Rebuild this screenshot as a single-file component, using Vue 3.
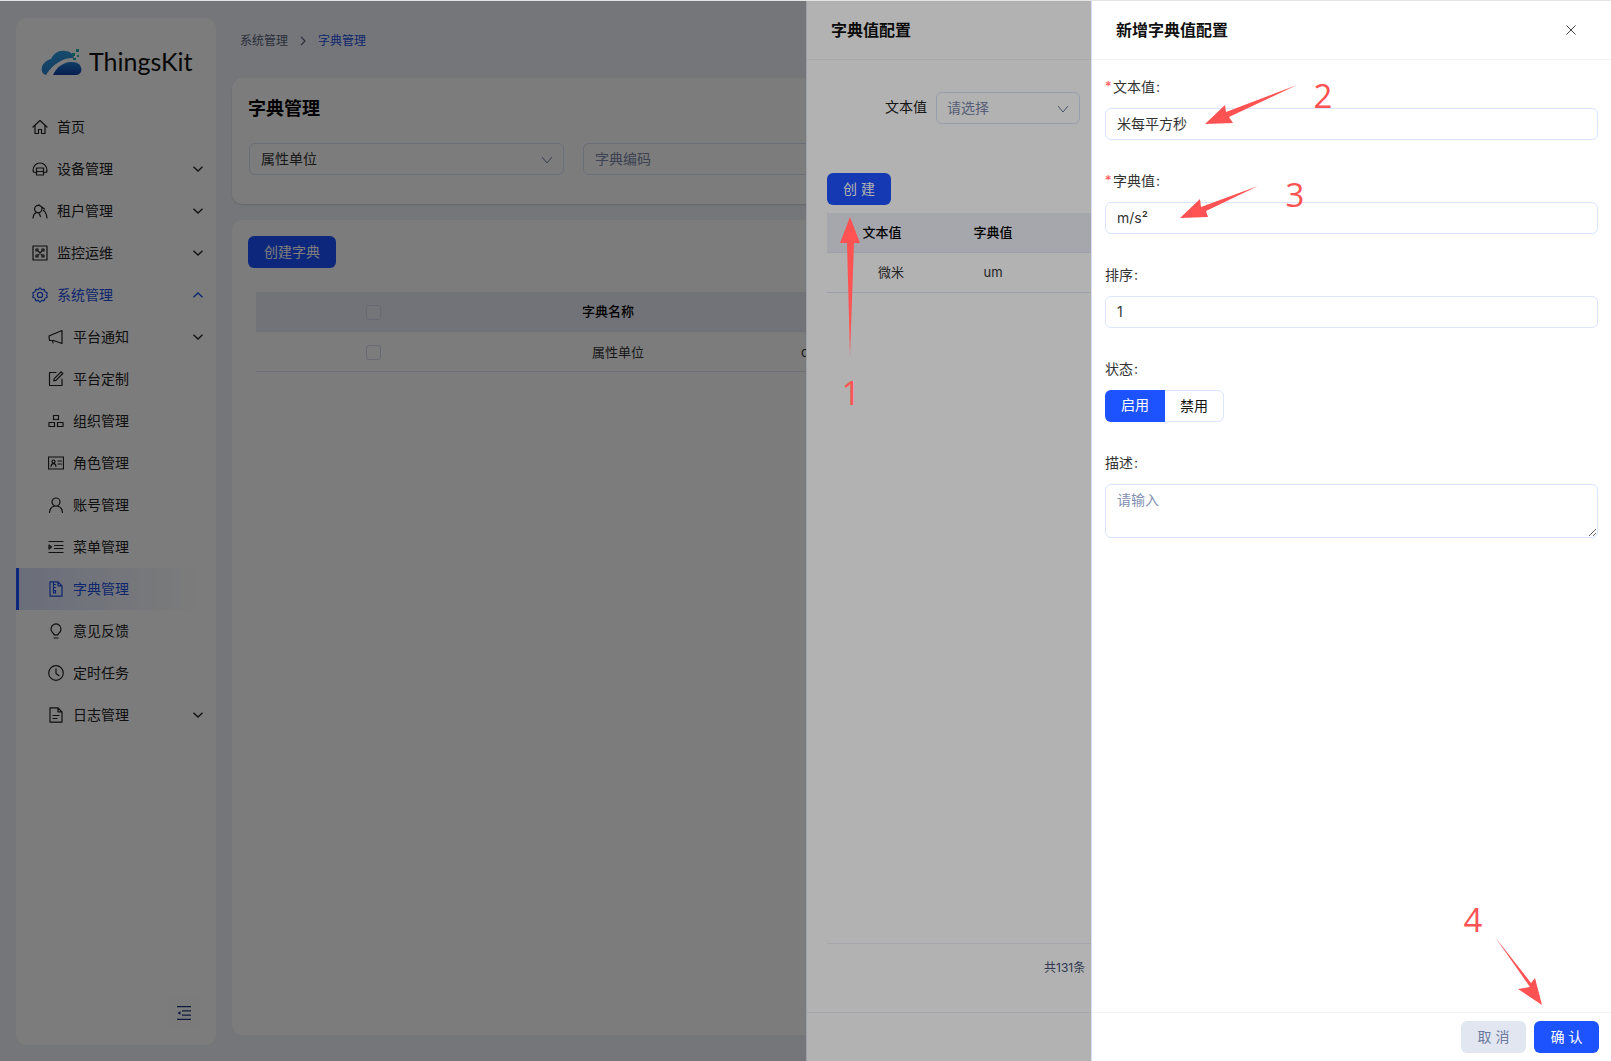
<script setup>
const icons = {
  home: 'M1 8 8 1.500 15 8M3 6.500V14.500h3.500v-4h3v4H13V6.500',
  device: 'M1 9.500C1 5 4 2 8 2s7 3 7 7.500c0 1.200-1 2-2 2h-1M4 11.500H3c-1 0-2-.8-2-2M4.500 7h7v7h-7zM4.500 10.500h7',
  tenant: 'M10 6a3.700 3.700 0 1 1-7.400 0 3.700 3.700 0 0 1 7.400 0zM1 15c.5-3.500 1.800-5 3.500-5.300M7 2l5.500 4M11.500 7.500c2 1 3 3.500 3.500 7.500M7 10l1.500 3.500',
  monitor: 'M1 1h14v14H1zM6.500 6.500l3 3M9.500 6.500l-3 3M4 4h2v2H4zM10 4h2v2h-2zM4 10h2v2H4zM10 10h2v2h-2z',
  gear: 'M8 .8l1.700 1.900 2.500-.4.800 2.400 2.300 1-.7 2.300.7 2.300-2.300 1-.8 2.400-2.500-.4L8 15.200l-1.700-1.900-2.500.4-.8-2.400-2.300-1 .7-2.300-.7-2.300 2.300-1 .8-2.400 2.500.4zM10.700 8a2.700 2.700 0 1 1-5.400 0 2.700 2.700 0 0 1 5.400 0z',
  notify: 'M14 1.500v13L5.500 11.500H1.500L1 7zM4.500 11.500l.5 2.500M1 7l13-5.500',
  edit: 'M14 8v6.500H1.500v-13H8M14.800 2.500l-6.800 6.800-2.300.6.600-2.300L13 .8z',
  org: 'M5.500 2.500h5v4h-5zM1 9.500h5.500v4H1zM9.500 9.500H15v4H9.500z',
  role: 'M.5 2h15v12H.5zM3 11.500c.3-2 1-2.800 2.500-2.800s2.200.8 2.500 2.800M7 6.500a1.500 1.500 0 1 1-3 0 1.500 1.500 0 0 1 3 0zM10 6h3.500M10 9h3.500',
  user: 'M12 5a4 4 0 1 1-8 0 4 4 0 0 1 8 0zM1.500 15.500c.5-4.500 3-6.500 6.500-6.500s6 2 6.500 6.500',
  menu: 'M1 2.500h14M6.500 6.500H15M6.500 9.500H15M1 13.500h14M1 6l2.500 2L1 10z',
  dict: 'M2 .8h8l4 4v10.400H2zM10 .8v4h4M5.500 .8v9M5.500 3.500h2M5.500 6.500h2M5.500 9.500h2v2.500h-2z',
  bulb: 'M13 6a5 5 0 1 0-8 4c.7.500 1 1 1 1.800h4c0-.8.3-1.300 1-1.800A5 5 0 0 0 13 6zM6 15h4',
  clock: 'M15.300 8A7.300 7.300 0 1 1 .7 8a7.300 7.300 0 0 1 14.600 0zM8 3.800v4.700l3 2.200',
  log: 'M2 .8h8l4 4v10.400H2zM10 .8v4h4M5 8.500h6M5 11.500h4'
}
const menu = [
  { label: '首页', icon: 'home' },
  { label: '设备管理', icon: 'device', arrow: 'down' },
  { label: '租户管理', icon: 'tenant', arrow: 'down' },
  { label: '监控运维', icon: 'monitor', arrow: 'down' },
  { label: '系统管理', icon: 'gear', arrow: 'up', open: true },
  { label: '平台通知', icon: 'notify', arrow: 'down', sub: true },
  { label: '平台定制', icon: 'edit', sub: true },
  { label: '组织管理', icon: 'org', sub: true },
  { label: '角色管理', icon: 'role', sub: true },
  { label: '账号管理', icon: 'user', sub: true },
  { label: '菜单管理', icon: 'menu', sub: true },
  { label: '字典管理', icon: 'dict', sub: true, active: true },
  { label: '意见反馈', icon: 'bulb', sub: true },
  { label: '定时任务', icon: 'clock', sub: true },
  { label: '日志管理', icon: 'log', arrow: 'down', sub: true }
]
</script>

<template>
  <div class="root">
    <div class="page">
      <aside class="sidebar">
        <div class="logo">
          <svg class="logo-mark" width="41" height="27" viewBox="0 0 41 27">
            <defs>
              <linearGradient id="cloudA" x1="0" y1="0" x2="0" y2="1">
                <stop offset="0" stop-color="#2f9bdf" /><stop offset="1" stop-color="#2a7fd0" />
              </linearGradient>
              <linearGradient id="cloudB" x1="0" y1="0" x2="0" y2="1">
                <stop offset="0" stop-color="#1f7fd0" /><stop offset="1" stop-color="#123fa8" />
              </linearGradient>
            </defs>
            <path fill="url(#cloudA)" d="M5 26C1 25 0 21 1 18c1-4 5-7 9-8 3-6 8-9 14-8 5 0 8 3 9 7-9-1-21 5-28 17z" />
            <path fill="url(#cloudB)" d="M12 26c3-7 9-12 17-13 3 0 6 0 9 2 2 2 3 5 2 8-1 2-3 3-5 3z" />
            <g fill="#1fb5a8"><rect x="35" y="0" width="3" height="3" /><rect x="31" y="4" width="3" height="3" /><rect x="36" y="6" width="2" height="2" /><rect x="32" y="9" width="3" height="2" /></g>
          </svg>
          <span class="logo-text">ThingsKit</span>
        </div>
        <nav>
          <div v-for="m in menu" :key="m.label" class="item" :class="{ sub: m.sub, active: m.active, open: m.open }">
            <svg class="ico" width="16" height="16" viewBox="0 0 16 16" fill="none" stroke="currentColor" stroke-width="1.200" stroke-linejoin="round" stroke-linecap="round">
              <path :d="icons[m.icon]" />
            </svg>
            <span class="item-label">{{ m.label }}</span>
            <svg v-if="m.arrow" class="chev" width="10" height="6" viewBox="0 0 10 6" fill="none" stroke="currentColor" stroke-width="1.300">
              <path :d="m.arrow === 'down' ? 'M.5.800 5 5 9.500.8' : 'M.5 5.200 5 1l4.500 4.200'" />
            </svg>
          </div>
        </nav>
        <div class="sidebar-foot">
          <div class="collapse">
            <svg width="14" height="14" viewBox="0 0 14 14" fill="none" stroke="#1f3a80" stroke-width="1.300">
              <path d="M0 .7h14M5 4.800h9M5 9.200h9M0 13.300h14" /><path d="M3.500 5v4L.5 7z" fill="#1f3a80" stroke="none" />
            </svg>
          </div>
        </div>
      </aside>
      <main class="main">
        <div class="crumbs">
          <span>系统管理</span>
          <svg class="sep" width="6" height="10" viewBox="0 0 6 10" fill="none" stroke="currentColor" stroke-width="1.200"><path d="M1 .8 5 5 1 9.200" /></svg>
          <span class="current">字典管理</span>
        </div>
        <section class="card search">
          <h2>字典管理</h2>
          <div class="search-row">
            <div class="field select wide">属性单位
              <svg class="sel-arrow" width="12" height="8" viewBox="0 0 12 8" fill="none" stroke="currentColor"><path d="M1 1l5 6 5-6" /></svg>
            </div>
            <div class="field placeholder">字典编码</div>
          </div>
        </section>
        <section class="card list">
          <button class="btn primary">创建字典</button>
          <div class="base-table">
            <div class="base-tr head"><span class="cb"></span><span class="c-name">字典名称</span></div>
            <div class="base-tr"><span class="cb"></span><span class="c-name shift">属性单位</span><span class="c-code">c</span></div>
          </div>
        </section>
      </main>
    </div>

    <div class="mask"></div>

    <section class="drawer first">
      <header class="d-head">字典值配置</header>
      <div class="d1-filter">
        <span class="d1-label">文本值</span>
        <div class="field select small placeholder">请选择
          <svg class="sel-arrow" width="12" height="8" viewBox="0 0 12 8" fill="none" stroke="currentColor"><path d="M1 1l5 6 5-6" /></svg>
        </div>
      </div>
      <button class="btn primary create">创 建</button>
      <div class="d1-table">
        <div class="d1-tr head"><span class="col-a">文本值</span><span class="col-b">字典值</span></div>
        <div class="d1-tr"><span class="col-a body">微米</span><span class="col-b">um</span></div>
      </div>
      <div class="d1-pager">共131条</div>
      <div class="d1-foot"></div>
    </section>

    <div class="mask"></div>

    <section class="drawer second">
      <header class="d-head">
        新增字典值配置
        <svg class="close" width="10" height="10" viewBox="0 0 10 10" stroke="#444" stroke-width="1" fill="none"><path d="M.5.500l9 9M9.500.5l-9 9" /></svg>
      </header>
      <div class="form">
        <div class="f-item"><label class="req">文本值 :</label><input class="ctl" value="米每平方秒" readonly /></div>
        <div class="f-item"><label class="req">字典值 :</label><input class="ctl" value="m/s²" readonly /></div>
        <div class="f-item"><label>排序 :</label><input class="ctl" value="1" readonly /></div>
        <div class="f-item">
          <label>状态 :</label>
          <div class="radio"><span class="on">启用</span><span>禁用</span></div>
        </div>
        <div class="f-item"><label>描述 :</label><textarea class="ctl area" placeholder="请输入" readonly></textarea></div>
      </div>
      <footer class="d-foot">
        <button class="btn cancel">取 消</button>
        <button class="btn primary">确 认</button>
      </footer>
    </section>

    <svg class="notes" width="1611" height="1061" viewBox="0 0 1611 1061">
      <g fill="#ff5252">
        <polygon points="850,217 860,243 854,243 850,356 847,243 840,243" />
        <polygon points="1297,85 1229,117 1233,123 1205,124 1225,105 1226,112" />
        <polygon points="1258,186 1206,211 1208,217 1180,218 1200,199 1201,207" />
        <polygon points="1495,937 1531,983 1535,978 1542,1005 1518,989 1530,987" />
        <text x="851" y="405" text-anchor="middle" class="num">1</text>
        <text x="1323" y="108" text-anchor="middle" class="num">2</text>
        <text x="1295" y="207" text-anchor="middle" class="num">3</text>
        <text x="1473" y="932" text-anchor="middle" class="num">4</text>
      </g>
    </svg>
    <div class="top-strip"></div>
  </div>
</template>

<style>
html, body { margin: 0; padding: 0; overflow: hidden; }
</style>

<style scoped>
* { box-sizing: border-box; }
.root {
  position: relative;
  width: 1611px;
  height: 1061px;
  overflow: hidden;
  background: #eff2fb;
  font-family: Inter, "Noto Sans CJK SC", sans-serif;
  font-size: 14px;
  color: #222;
}
.page { display: flex; gap: 16px; padding: 18px 0 0 16px; height: 100%; }
.sidebar { width: 200px; height: 1027px; background: #fff; border-radius: 10px; display: flex; flex-direction: column; flex: none; }
.logo { height: 88px; display: flex; align-items: flex-start; padding: 31px 0 0 25px; gap: 7px; }
.logo-text { font-size: 25px; line-height: 24px; font-family: Lato, sans-serif; color: #111; }
.item { height: 42px; display: flex; align-items: center; padding-left: 16px; position: relative; color: #222; }
.item .ico { flex: none; }
.item-label { margin: -2px 0 0 9px; }
.item.sub { padding-left: 32px; }
.item.open, .item.active { color: #1d4fe0; }
.item.active { background: linear-gradient(90deg, #dbe3fb, #ffffff 92%); border-left: 3px solid #1d4fff; padding-left: 29px; }
.chev { position: absolute; left: 177px; top: 18px; color: #222; }
.open .chev { color: #1d4fe0; }
.sidebar-foot { margin-top: auto; display: flex; justify-content: flex-end; padding: 0 16px 16px 0; }
.collapse { width: 32px; height: 32px; border-radius: 6px; background: #fdfefd; display: flex; align-items: center; justify-content: center; }
.main { flex: 1; min-width: 0; }
.crumbs { height: 60px; display: flex; align-items: flex-start; padding: 13px 0 0 8px; font-size: 12px; line-height: 19px; color: #555f75; }
.sep { margin: 5px 12px 0 12px; flex: none; }
.current { color: #1d4fe0; }
.card { background: #fff; border-radius: 10px; }
.search { height: 126px; margin-bottom: 16px; padding: 18px 16px; box-shadow: 0 1px 2px rgba(0, 0, 0, .12); }
h2 { margin: 0; font-size: 18px; line-height: 26px; font-weight: 700; color: #000; }
.search-row { display: flex; gap: 19px; margin-top: 21px; padding-left: 1px; }
.field { position: relative; height: 32px; line-height: 30px; border: 1px solid #d9e2f8; border-radius: 6px; padding: 0 11px; background: #fff; flex: none; font-size: 14px; color: #333; }
.wide { width: 315px; }
.search-row .placeholder { width: 600px; }
.placeholder { color: #7c89a8; }
.small { width: 144px; padding: 0 10px; }
.sel-arrow { position: absolute; right: 10px; top: 12px; color: #6c7a9a; }
.list { height: 815px; padding: 16px; }
.btn { height: 32px; border: 0; border-radius: 6px; font-family: inherit; font-size: 14px; padding: 0 0 2px; display: block; }
.primary { background: #1d52ff; color: #fff; width: 88px; }
.base-table { margin: 24px 0 0 8px; }
.base-tr { height: 40px; display: flex; align-items: center; border-bottom: 1px solid #e3e8f5; position: relative; color: #333; font-size: 13px; }
.base-tr.head { background: #eaedf6; color: #000; font-weight: 500; }
.base-tr.head span.c-name { margin-top: -2px; }
.cb { position: absolute; left: 110px; top: 13px; width: 15px; height: 15px; border: 1px solid #d5dcf0; border-radius: 3px; background: #fff; }
.head .cb { top: 13px; background: #eef1f8; }
.c-name { position: absolute; left: 326px; }
.c-name.shift { left: 336px; }
.c-code { position: absolute; left: 545px; }
.mask { position: absolute; inset: 0; background: rgba(0, 0, 0, .3); }
.drawer { position: absolute; top: 0; bottom: 0; background: #fff; }
.first { left: 806px; right: 0; border-left: 1px solid #dfe5f5; }
.second { left: 1091px; right: 0; border-left: 1px solid #d6e1ff; display: flex; flex-direction: column; }
.d-head { height: 60px; border-bottom: 1px solid #f0f2f7; padding-left: 24px; line-height: 60px; font-size: 16px; font-weight: 700; color: #111; position: relative; flex: none; }
.close { position: absolute; right: 35px; top: 25px; }
.d1-filter { position: absolute; left: 0; top: 92px; display: flex; align-items: flex-start; color: #222; }
.d1-label { margin-left: 78px; width: 51px; line-height: 30px; }
.create { position: absolute; left: 20px; top: 173px; width: 64px; }
.d1-table { position: absolute; left: 20px; top: 213px; right: 0; }
.d1-tr { height: 40px; position: relative; border-bottom: 1px solid #dfe5f7; font-size: 13px; color: #333; }
.d1-tr.head { background: #eef0f7; color: #000; font-weight: 500; }
.col-a, .col-b { position: absolute; top: 0; line-height: 39px; transform: translateX(-50%); white-space: nowrap; }
.col-a { left: 55px; }
.col-a.body { left: 64px; }
.col-b { left: 166px; }
.d1-pager { position: absolute; left: 20px; right: 0; top: 943px; height: 50px; border-top: 1px solid #eef0f6; font-size: 12px; line-height: 48px; padding-left: 217px; color: #455272; }
.d1-foot { position: absolute; left: 0; right: 0; top: 1012px; border-top: 1px solid #eef0f6; }
.form { padding: 16px 13px 0 13px; flex: 1; }
.f-item { margin-bottom: 30px; }
.f-item label { display: block; height: 22px; line-height: 22px; margin-bottom: 10px; font-size: 14px; color: #333; word-spacing: -3px; }
.req { position: relative; padding-left: 8px; }
.req::before { content: "*"; position: absolute; left: 0; top: -1px; color: #ff4d4f; font-size: 13px; }
.ctl { display: block; width: 100%; height: 32px; border: 1px solid #dbe5ff; border-radius: 6px; padding: 0 11px 2px; font-family: inherit; font-size: 14px; color: #333; outline: none; background: #fff; }
.area { height: 54px; padding: 4px 11px; line-height: 22px; resize: vertical; }
.area::placeholder { color: #7f8fb0; }
.radio { display: flex; width: 119px; height: 32px; border: 1px solid #dbe5ff; border-radius: 6px; }
.radio span { flex: 1; text-align: center; line-height: 30px; font-size: 14px; color: #111; }
.radio .on { flex: none; width: 60px; height: 32px; margin: -1px 0 -1px -1px; border-radius: 6px 0 0 6px; background: #1d52ff; color: #fff; }
.d-foot { height: 49px; border-top: 1px solid #f0f2f7; display: flex; justify-content: flex-end; gap: 8px; padding: 8px 12px 0 0; flex: none; }
.d-foot .btn { width: 65px; }
.cancel { background: #e2e6f1; color: #6b7a9c; }
.notes { position: absolute; left: 0; top: 0; pointer-events: none; }
.num { font-family: "Open Sans", sans-serif; font-size: 33px; font-weight: 400; }
.top-strip { position: absolute; left: 0; right: 0; top: 0; height: 1px; background: #e4e4e4; }
</style>
